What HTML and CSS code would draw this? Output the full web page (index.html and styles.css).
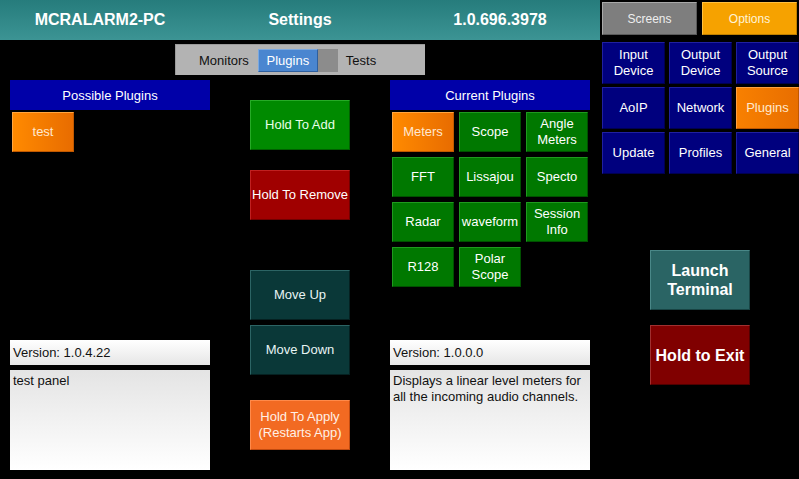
FILE: index.html
```html
<!DOCTYPE html>
<html>
<head>
<meta charset="utf-8">
<link rel="stylesheet" href="styles.css">
</head>
<body>
<div class="page">
  <div class="main">
    <div class="header">
      <span class="h-name">MCRALARM2-PC</span>
      <span class="h-title">Settings</span>
      <span class="h-ver">1.0.696.3978</span>
    </div>
    <div class="tabrow">
      <div class="tabs">
        <span class="tab">Monitors</span>
        <span class="tab-group"><span class="tab-active">Plugins</span><span class="tab-dark"></span></span>
        <span class="tab">Tests</span>
      </div>
    </div>
    <div class="content">
      <div class="col">
        <div class="col-head">Possible Plugins</div>
        <div class="list">
          <div class="pbtn orange">test</div>
        </div>
        <div class="ver">Version: 1.0.4.22</div>
        <div class="desc">test panel</div>
      </div>
      <div class="mid">
        <div class="abtn green m-add">Hold To Add</div>
        <div class="abtn red m-rem">Hold To Remove</div>
        <div class="abtn dteal m-up">Move Up</div>
        <div class="abtn dteal m-down">Move Down</div>
        <div class="abtn apply m-apply">Hold To Apply<br>(Restarts App)</div>
      </div>
      <div class="col">
        <div class="col-head">Current Plugins</div>
        <div class="list grid">
          <div class="pbtn orange">Meters</div>
          <div class="pbtn pgreen">Scope</div>
          <div class="pbtn pgreen">Angle<br>Meters</div>
          <div class="pbtn pgreen">FFT</div>
          <div class="pbtn pgreen">Lissajou</div>
          <div class="pbtn pgreen">Specto</div>
          <div class="pbtn pgreen">Radar</div>
          <div class="pbtn pgreen">waveform</div>
          <div class="pbtn pgreen">Session<br>Info</div>
          <div class="pbtn pgreen">R128</div>
          <div class="pbtn pgreen">Polar<br>Scope</div>
        </div>
        <div class="ver">Version: 1.0.0.0</div>
        <div class="desc">Displays a linear level meters for all the incoming audio channels.</div>
      </div>
    </div>
  </div>
  <div class="side">
    <div class="topbtns">
      <div class="tbtn screens">Screens</div>
      <div class="tbtn options">Options</div>
    </div>
    <div class="nav">
      <div class="nbtn">Input<br>Device</div>
      <div class="nbtn">Output<br>Device</div>
      <div class="nbtn">Output<br>Source</div>
      <div class="nbtn">AoIP</div>
      <div class="nbtn">Network</div>
      <div class="nbtn nactive">Plugins</div>
      <div class="nbtn">Update</div>
      <div class="nbtn">Profiles</div>
      <div class="nbtn">General</div>
    </div>
    <div class="bigbtn launch">Launch<br>Terminal</div>
    <div class="bigbtn exit">Hold to Exit</div>
  </div>
</div>
</body>
</html>
```
FILE: styles.css
```css
* { box-sizing: border-box; }
html, body {
  margin: 0;
  padding: 0;
  background: #000;
  width: 799px;
  height: 479px;
  overflow: hidden;
  font-family: "Liberation Sans", Arial, sans-serif;
}
.page {
  display: flex;
  width: 799px;
  height: 479px;
}
.main {
  width: 600px;
  display: flex;
  flex-direction: column;
}
.header {
  height: 40px;
  background: linear-gradient(to bottom, #267c7c, #3c9494);
  display: flex;
  align-items: center;
  color: #fff;
  font-weight: bold;
  font-size: 16px;
}
.header span { text-align: center; width: 200px; }

.tabrow {
  padding: 4px 0 0 175px;
  height: 40px;
}
.tabs {
  width: 250px;
  height: 31px;
  background: #b3b3b3;
  border-top: 1px solid #9a9a9a;
  border-left: 1px solid #9a9a9a;
  display: flex;
  align-items: center;
  padding-left: 23px;
  font-size: 13px;
  color: #111;
}
.tab-group {
  display: flex;
  height: 23px;
  margin-left: 9px;
  margin-right: 8px;
}
.tab-active {
  width: 60px;
  height: 23px;
  background: #4a86d0;
  border: 1px solid #2e5f9e;
  border-top-color: #7aa8e0;
  border-left-color: #7aa8e0;
  color: #fff;
  display: flex;
  align-items: center;
  justify-content: center;
}
.tab-dark {
  width: 20px;
  background: #8c8c8c;
}

.content {
  display: flex;
  padding-left: 10px;
  height: 390px;
}
.col {
  width: 200px;
  display: flex;
  flex-direction: column;
}
.col-head {
  height: 30px;
  background: #0000a8;
  color: #fff;
  font-size: 13px;
  display: flex;
  align-items: center;
  justify-content: center;
}
.list {
  height: 230px;
  padding: 2px 0 0 2px;
}
.grid {
  display: grid;
  grid-template-columns: repeat(3, 62px);
  grid-auto-rows: 40px;
  gap: 5px;
  align-content: start;
}
.pbtn {
  width: 62px;
  height: 40px;
  display: flex;
  align-items: center;
  justify-content: center;
  text-align: center;
  color: #fff;
  font-size: 13px;
  line-height: 16px;
  border: 1px solid;
}
.orange {
  background: linear-gradient(to right, #ff8a00, #e86c00);
  border-color: #ffa640 #c05800 #c05800 #ffa640;
  color: #ffe8d0;
}
.pgreen {
  background: #007800;
  border-color: #1f9a1f #005000 #005000 #1f9a1f;
}
.ver {
  height: 25px;
  background: linear-gradient(to bottom, #ffffff, #e6e6e6);
  font-size: 13px;
  color: #111;
  padding: 5px 0 0 3px;
  margin-bottom: 5px;
}
.desc {
  height: 100px;
  background: linear-gradient(to bottom, #e4e4e4, #ffffff);
  font-size: 13px;
  line-height: 16px;
  color: #111;
  padding: 3px 3px;
}

.mid {
  width: 180px;
  padding-left: 40px;
  display: flex;
  flex-direction: column;
}
.abtn {
  width: 100px;
  height: 50px;
  display: flex;
  align-items: center;
  justify-content: center;
  text-align: center;
  color: #fff;
  font-size: 13px;
  line-height: 16px;
  border: 1px solid;
}
.m-add { margin-top: 20px; }
.m-rem { margin-top: 20px; }
.m-up { margin-top: 50px; }
.m-down { margin-top: 5px; }
.m-apply { margin-top: 25px; }
.green {
  background: #008a00;
  border-color: #26aa26 #006000 #006000 #26aa26;
  color: #e8ffe8;
}
.red {
  background: #a00000;
  border-color: #c02020 #700000 #700000 #c02020;
}
.dteal {
  background: #0a3838;
  border-color: #2c6464 #052020 #052020 #2c6464;
  color: #e8f4f4;
}
.apply {
  background: #f26a22;
  border-color: #ff8a4a #c04a10 #c04a10 #ff8a4a;
  color: #fff0e6;
}

.side {
  width: 199px;
  display: flex;
  flex-direction: column;
  padding-left: 2px;
}
.topbtns {
  display: flex;
  gap: 5px;
  margin-top: 2px;
}
.tbtn {
  width: 95px;
  height: 33px;
  display: flex;
  align-items: center;
  justify-content: center;
  font-size: 12px;
  border: 1px solid;
}
.screens {
  background: #7e7e7e;
  border-color: #a8a8a8 #5a5a5a #5a5a5a #a8a8a8;
  color: #eee;
}
.options {
  background: #f6a200;
  border-color: #ffc040 #c08000 #c08000 #ffc040;
  color: #fff4d8;
}
.nav {
  margin-top: 7px;
  display: grid;
  grid-template-columns: repeat(3, 63px);
  grid-auto-rows: 42px;
  column-gap: 4px;
  row-gap: 3px;
}
.nbtn {
  display: flex;
  align-items: center;
  justify-content: center;
  text-align: center;
  background: #00007e;
  border: 1px solid;
  border-color: #2020a0 #000050 #000050 #2020a0;
  color: #fff;
  font-size: 13px;
  line-height: 16px;
}
.nactive {
  background: linear-gradient(to right, #f88000, #e86e00);
  border-color: #ffa040 #c05800 #c05800 #ffa040;
  color: #ffe8cc;
}
.bigbtn {
  width: 100px;
  height: 60px;
  margin-left: 48px;
  display: flex;
  align-items: center;
  justify-content: center;
  text-align: center;
  color: #fff;
  font-weight: bold;
  font-size: 16px;
  line-height: 19px;
  border: 1px solid;
}
.launch {
  margin-top: 76px;
  background: #2a6464;
  border-color: #4a8888 #184444 #184444 #4a8888;
}
.exit {
  margin-top: 15px;
  background: #800000;
  border-color: #a03030 #500000 #500000 #a03030;
}
```
